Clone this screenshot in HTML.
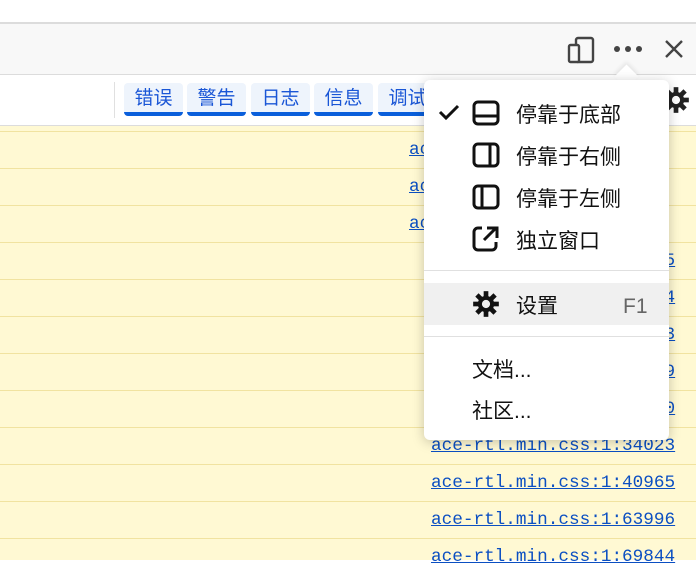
<!DOCTYPE html>
<html><head><meta charset="utf-8"><style>
body{margin:0;width:696px;height:560px;overflow:hidden;position:relative;background:#fff;font-family:"Liberation Sans","Noto Sans CJK SC",sans-serif}
.top{position:absolute;left:0;top:0;width:696px;height:22px;background:#fff;border-bottom:2px solid #dcdcdc}
.tb{position:absolute;left:0;top:24px;width:696px;height:50px;background:#f8f8f8;border-bottom:1px solid #dcdcdc}
.fr{position:absolute;left:0;top:75px;width:696px;height:50px;background:#fff;border-bottom:1px solid #dcdcdc}
.sep{position:absolute;left:114px;top:7px;width:1px;height:36px;background:#e0e0e0}
.tab{position:absolute;top:8px;height:29px;width:59px;background:#eef4fc;border-radius:4px;border-bottom:4px solid #0a5fdb;color:#1a56d6;font-size:19px;text-align:center;line-height:32px}
.rows{position:absolute;left:0;top:126px;width:696px;height:434px;background:#fff9d3}
.line{position:absolute;left:0;width:696px;height:1px;background:#f1e3a0}
.lnk{position:absolute;left:431px;font-family:"Liberation Mono",monospace;font-size:17.7px;color:#0b4fc2;text-decoration:underline}
.menu{position:absolute;left:424px;top:80px;width:245px;height:360px;background:#fff;border-radius:6px;box-shadow:0 2px 12px rgba(0,0,0,.22)}
.arrow{position:absolute;left:618px;top:68px;width:17px;height:17px;background:#fff;transform:rotate(45deg);box-shadow:-2px -2px 4px rgba(0,0,0,.08)}
.mi{position:absolute;left:92px;font-size:21px;color:#111;line-height:26px;margin-top:2px}
.ic{position:absolute;left:48px}
</style></head><body>
<div class="top"></div>
<div class="tb">
<svg style="position:absolute;left:567px;top:12px" width="28" height="28" viewBox="0 0 28 28" fill="none" stroke="#444" stroke-width="2.4"><rect x="9" y="2" width="17" height="24" rx="2"/><rect x="2" y="9" width="10" height="17" rx="1.5" fill="#f8f8f8"/></svg>
<svg style="position:absolute;left:613px;top:20px" width="30" height="10"><circle cx="4" cy="5" r="3" fill="#444"/><circle cx="15" cy="5" r="3" fill="#444"/><circle cx="26" cy="5" r="3" fill="#444"/></svg>
<svg style="position:absolute;left:664px;top:15px" width="20" height="20" stroke="#444" stroke-width="2.4"><path d="M2 2L18 18M18 2L2 18"/></svg>
</div>
<div class="fr"><div class="sep"></div>
<div class="tab" style="left:124px">错误</div>
<div class="tab" style="left:187px">警告</div>
<div class="tab" style="left:251px">日志</div>
<div class="tab" style="left:314px">信息</div>
<div class="tab" style="left:378px">调试</div>
<svg style="position:absolute;left:662px;top:11px" width="28" height="28" viewBox="0 0 24 24"><g fill="#222"><circle cx="12" cy="12" r="7"/><rect x="10" y="1" width="4" height="22"/><rect x="1" y="10" width="22" height="4"/><rect x="10" y="1" width="4" height="22" transform="rotate(45 12 12)"/><rect x="10" y="1" width="4" height="22" transform="rotate(-45 12 12)"/></g><circle cx="12" cy="12" r="3.5" fill="#fff"/></svg>
</div>
<div class="rows">
<div class="line" style="top:5px"></div><div class="line" style="top:42px"></div><div class="line" style="top:79px"></div><div class="line" style="top:116px"></div><div class="line" style="top:153px"></div><div class="line" style="top:190px"></div><div class="line" style="top:227px"></div><div class="line" style="top:264px"></div><div class="line" style="top:301px"></div><div class="line" style="top:338px"></div><div class="line" style="top:375px"></div><div class="line" style="top:412px"></div>
</div>
<div class="lnk" style="top:140px;left:409px">ace-rtl.min.css:1:34025</div>
<div class="lnk" style="top:177px;left:409px">ace-rtl.min.css:1:34023</div>
<div class="lnk" style="top:214px;left:409px">ace-rtl.min.css:1:34027</div>
<div class="lnk" style="top:251px">ace-rtl.min.css:1:34025</div>
<div class="lnk" style="top:288px">ace-rtl.min.css:1:34024</div>
<div class="lnk" style="top:325px">ace-rtl.min.css:1:34023</div>
<div class="lnk" style="top:362px">ace-rtl.min.css:1:34029</div>
<div class="lnk" style="top:399px">ace-rtl.min.css:1:34020</div>
<div class="lnk" style="top:436px">ace-rtl.min.css:1:34023</div>
<div class="lnk" style="top:473px">ace-rtl.min.css:1:40965</div>
<div class="lnk" style="top:510px">ace-rtl.min.css:1:63996</div>
<div class="lnk" style="top:547px">ace-rtl.min.css:1:69844</div>
<div class="arrow"></div>
<div class="menu">
<svg style="position:absolute;left:14px;top:23px" width="22" height="18" stroke="#111" stroke-width="3" fill="none"><path d="M2 9L8 15L20 3"/></svg>
<svg class="ic" style="top:20px" width="28" height="26" fill="none" stroke="#111" stroke-width="3"><rect x="2" y="2" width="24" height="22" rx="4"/><path d="M2 16H26"/></svg>
<div class="mi" style="top:21px">停靠于底部</div>
<svg class="ic" style="top:62px" width="28" height="26" fill="none" stroke="#111" stroke-width="3"><rect x="2" y="2" width="24" height="22" rx="4"/><path d="M18 2V24"/></svg>
<div class="mi" style="top:63px">停靠于右侧</div>
<svg class="ic" style="top:104px" width="28" height="26" fill="none" stroke="#111" stroke-width="3"><rect x="2" y="2" width="24" height="22" rx="4"/><path d="M10 2V24"/></svg>
<div class="mi" style="top:105px">停靠于左侧</div>
<svg class="ic" style="top:146px" width="28" height="26" fill="none" stroke="#111" stroke-width="3"><path d="M10 2H6a4 4 0 0 0-4 4v14a4 4 0 0 0 4 4h14a4 4 0 0 0 4-4v-4"/><path d="M12 14L24 2M15 2H25V12" /></svg>
<div class="mi" style="top:147px">独立窗口</div>
<div style="position:absolute;left:0;top:190px;width:245px;height:1px;background:#e0e0e0"></div>
<div style="position:absolute;left:0;top:203px;width:245px;height:42px;background:#f0f0f0"></div>
<svg class="ic" style="top:210px" width="28" height="28" viewBox="0 0 24 24"><g fill="#111"><circle cx="12" cy="12" r="7"/><rect x="10" y="1" width="4" height="22"/><rect x="1" y="10" width="22" height="4"/><rect x="10" y="1" width="4" height="22" transform="rotate(45 12 12)"/><rect x="10" y="1" width="4" height="22" transform="rotate(-45 12 12)"/></g><circle cx="12" cy="12" r="3.5" fill="#f0f0f0"/></svg>
<div class="mi" style="top:212px">设置</div>
<div style="position:absolute;left:199px;top:214px;font-size:21px;line-height:26px;color:#666">F1</div>
<div style="position:absolute;left:0;top:256px;width:245px;height:1px;background:#e0e0e0"></div>
<div class="mi" style="top:276px;left:48px">文档...</div>
<div class="mi" style="top:317px;left:48px">社区...</div>
</div>
</body></html>
